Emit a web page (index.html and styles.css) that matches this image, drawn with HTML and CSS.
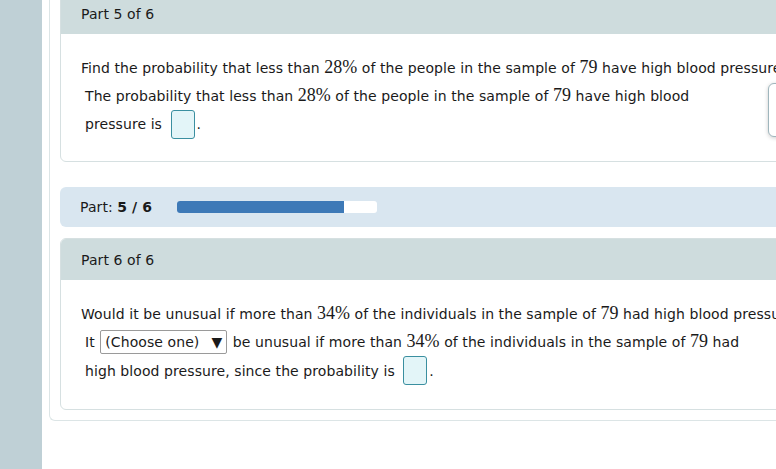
FILE: index.html
```html
<!DOCTYPE html>
<html>
<head>
<meta charset="utf-8">
<link rel="stylesheet" href="styles.css">
</head>
<body>
<div class="page">
  <div class="sidebar"></div>
  <div class="main">
    <div class="container">
      <div class="card card-first">
        <div class="card-head">Part 5 of 6</div>
        <div class="card-body">
          <p class="question">Find the probability that less than <span class="m">28%</span> of the people in the sample of <span class="m">79</span> have high blood pressure.</p>
          <div class="answer">The probability that less than <span class="m">28%</span> of the people in the sample of <span class="m">79</span> have high blood pressure is <span class="box"></span>.</div>
        </div>
      </div>

      <div class="progress">
        <span class="progress-label">Part: <b>5 / 6</b></span>
        <span class="bar"><span class="fill" style="width:83.3%"></span></span>
      </div>

      <div class="card">
        <div class="card-head">Part 6 of 6</div>
        <div class="card-body">
          <p class="question">Would it be unusual if more than <span class="m">34%</span> of the individuals in the sample of <span class="m">79</span> had high blood pressure?</p>
          <div class="answer answer-2">It <span class="select">(Choose one)<span class="arrow">▼</span></span> be unusual if more than <span class="m">34%</span> of the individuals in the sample of <span class="m">79</span> had high blood pressure, since the probability is <span class="box"></span>.</div>
        </div>
      </div>
    </div>
  </div>
  <div class="tool"></div>
</div>
</body>
</html>
```

FILE: styles.css
```css
html, body {
  margin: 0;
  padding: 0;
  overflow: hidden;
  background: #fff;
}
body {
  font-family: "DejaVu Sans", Verdana, sans-serif;
  font-size: 14px;
  letter-spacing: 0.08px;
  color: #1a1a1a;
  width: 776px;
  height: 469px;
}
.page {
  display: flex;
  height: 469px;
  position: relative;
}
.sidebar {
  width: 42px;
  flex: none;
  background: #bfd0d6;
}
.main {
  flex: none;
  padding-left: 7px;
}
.container {
  width: 900px;
  margin-top: -8px;
  border-left: 1px solid #dce5e6;
  border-bottom: 1px solid #dce5e6;
  border-bottom-left-radius: 6px;
  padding: 0 0 10px 10px;
}
.card {
  border: 1px solid #d6e0e1;
  border-radius: 6px;
  overflow: hidden;
  background: #fff;
}
.card-head {
  background: #cedcdd;
  padding: 11px 20px 10px 20px;
  line-height: 20px;
}
.card-body {
  padding: 23px 20px 22px 20px;
}
.question {
  margin: 0;
  line-height: 20px;
  white-space: nowrap;
}
.m {
  font-family: "Liberation Serif", "Times New Roman", serif;
  font-size: 18px;
  letter-spacing: 0;
}
.answer {
  margin-top: 3px;
  padding-left: 4px;
  width: 665px;
  line-height: 28px;
}
.answer-2 {
  line-height: 29px;
  margin-bottom: 1px;
}
.box {
  display: inline-block;
  width: 22px;
  height: 27px;
  border: 1px solid #3a8fa0;
  border-radius: 3px;
  background: #e3f5f8;
  vertical-align: middle;
  margin: -2px 2px 0 4px;
}
.select {
  display: inline-block;
  height: 22px;
  line-height: 22px;
  padding: 0 4px 0 4px;
  border: 1px solid #9a9a9a;
  border-radius: 2px;
  vertical-align: middle;
  margin: -2px 1px 0 1px;
}
.arrow {
  margin-left: 12px;
}
.progress {
  margin-top: 25px;
  margin-bottom: 11px;
  height: 40px;
  background: #d9e6f0;
  border-radius: 6px;
  display: flex;
  align-items: center;
  padding-left: 20px;
}
.progress-label {
  width: 97px;
  flex: none;
}
.bar {
  width: 200px;
  height: 12px;
  background: #fff;
  border-radius: 3px;
  overflow: hidden;
  display: block;
}
.fill {
  display: block;
  height: 100%;
  background: #3d79b7;
}
.tool {
  position: absolute;
  left: 768px;
  top: 83px;
  width: 40px;
  height: 52px;
  border: 1px solid #9fb6bd;
  border-radius: 6px;
  background: #fff;
  box-shadow: 0 1px 4px rgba(0,0,0,0.2);
}
```
